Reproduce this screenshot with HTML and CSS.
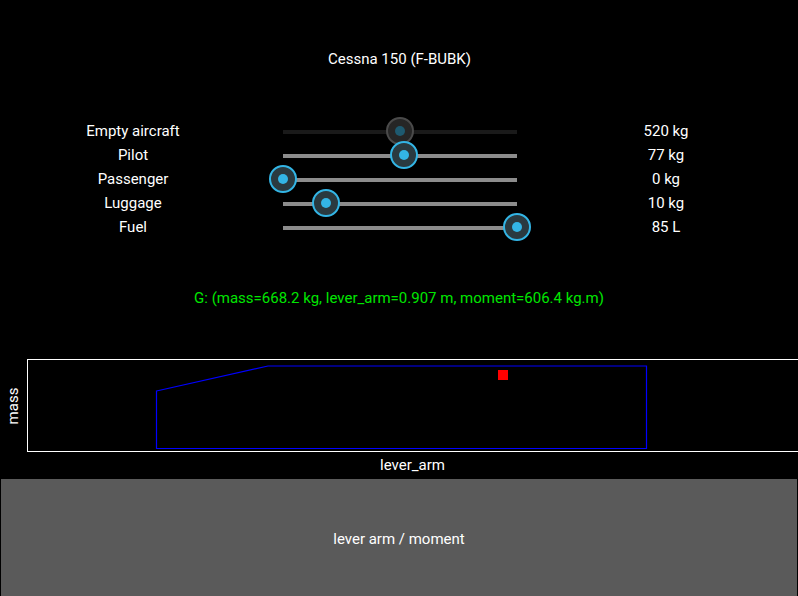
FILE: index.html
```html
<!DOCTYPE html>
<html>
<head>
<meta charset="utf-8">
<link rel="stylesheet" href="styles.css">
</head>
<body>
<div class="app">
  <h1 class="title">Cessna 150 (F-BUBK)</h1>
  <div class="rows">
    <div class="row">
      <span class="label">Empty aircraft</span>
      <div class="slider disabled"><div class="track"></div><div class="knob" style="left:50%"></div></div>
      <span class="value">520 kg</span>
    </div>
    <div class="row">
      <span class="label">Pilot</span>
      <div class="slider"><div class="track"></div><div class="knob" style="left:51.7%"></div></div>
      <span class="value">77 kg</span>
    </div>
    <div class="row">
      <span class="label">Passenger</span>
      <div class="slider"><div class="track"></div><div class="knob" style="left:0%"></div></div>
      <span class="value">0 kg</span>
    </div>
    <div class="row">
      <span class="label">Luggage</span>
      <div class="slider"><div class="track"></div><div class="knob" style="left:18.4%"></div></div>
      <span class="value">10 kg</span>
    </div>
    <div class="row">
      <span class="label">Fuel</span>
      <div class="slider"><div class="track"></div><div class="knob" style="left:100%"></div></div>
      <span class="value">85 L</span>
    </div>
  </div>
  <p class="result">G: (mass=668.2 kg, lever_arm=0.907 m, moment=606.4 kg.m)</p>
  <div class="chart">
    <div class="chart-main">
      <div class="ylabel"><span>mass</span></div>
      <svg class="plot" width="771" height="93" viewBox="0 0 771 93">
        <line x1="0" y1="0.5" x2="771" y2="0.5" stroke="#fff" stroke-width="1"/>
        <line x1="0" y1="92.5" x2="771" y2="92.5" stroke="#fff" stroke-width="1"/>
        <line x1="0.5" y1="0" x2="0.5" y2="93" stroke="#fff" stroke-width="1"/>
        <polygon points="129.5,32 241,7 619.5,7 619.5,89.5 129.5,89.5" fill="none" stroke="#0000ff" stroke-width="1.2"/>
        <rect x="471" y="11" width="10" height="10" fill="#ff0000"/>
      </svg>
    </div>
    <div class="xlabel">lever_arm</div>
  </div>
  <button class="mode">lever arm / moment</button>
</div>
</body>
</html>
```

FILE: styles.css
```css
html, body {
  margin: 0;
  padding: 0;
  background: #000;
  width: 798px;
  height: 596px;
  overflow: hidden;
}
.app {
  display: flex;
  flex-direction: column;
  font-family: Roboto, "Liberation Sans", sans-serif;
  font-size: 15px;
  color: #fff;
}
.title {
  margin: 0;
  height: 119px;
  line-height: 118px;
  font-size: 15px;
  font-weight: 400;
  text-align: center;
  box-sizing: border-box;
  padding-left: 1px;
}
.rows {
  display: flex;
  flex-direction: column;
}
.row {
  display: grid;
  grid-template-columns: 266px 268px 264px;
  height: 24px;
  align-items: center;
}
.label, .value {
  text-align: center;
  line-height: 24px;
}
.slider {
  position: relative;
  margin: 0 17px;
  height: 24px;
}
.track {
  position: absolute;
  left: 0;
  right: 0;
  top: 11px;
  height: 4px;
  background: #8c8c8c;
}
.knob {
  position: absolute;
  top: 0;
  width: 28px;
  height: 28px;
  margin-left: -14px;
  margin-top: -2px;
  border-radius: 50%;
  box-sizing: border-box;
  border: 2px solid #33b5e5;
  background: #2a3a40;
  display: flex;
  align-items: center;
  justify-content: center;
}
.knob::after {
  content: "";
  width: 10px;
  height: 10px;
  border-radius: 50%;
  background: #33b5e5;
}
.slider.disabled .track {
  background: #1a1a1a;
}
.slider.disabled .knob {
  border-color: #4a4a4a;
  background: #262626;
}
.slider.disabled .knob::after {
  background: #1e5a70;
}
.result {
  margin: 0;
  margin-top: 47px;
  line-height: 24px;
  text-align: center;
  color: #00e600;
}
.chart {
  margin-top: 49px;
  display: flex;
  flex-direction: column;
}
.chart-main {
  display: flex;
  height: 93px;
}
.ylabel {
  width: 27px;
  display: flex;
  align-items: center;
  justify-content: center;
}
.ylabel span {
  transform: rotate(-90deg);
  white-space: nowrap;
}
.plot {
  display: block;
}
.xlabel {
  margin-left: 27px;
  text-align: center;
  line-height: 27px;
}
.mode {
  margin: 0 1px;
  height: 130px;
  border: none;
  background: #5a5a5a;
  color: #fff;
  font-family: Roboto, "Liberation Sans", sans-serif;
  font-size: 15px;
  padding: 0 0 10px 0;
  text-align: center;
}
```
